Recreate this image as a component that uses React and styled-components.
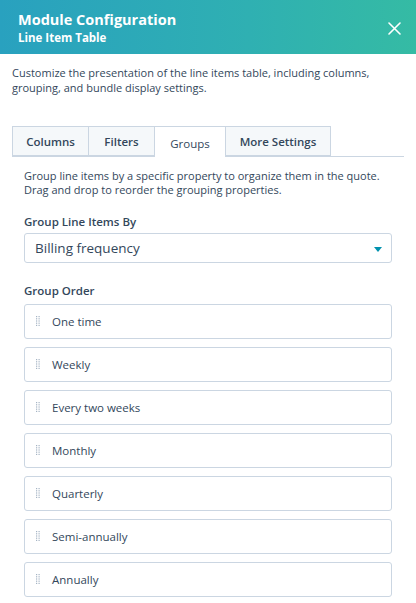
import React from 'react';
import styled, { createGlobalStyle } from 'styled-components';

const GlobalStyle = createGlobalStyle`
  html, body {
    margin: 0;
    padding: 0;
    background: #ffffff;
  }
  body {
    font-family: "Open Sans", "Liberation Sans", sans-serif;
    color: #33475b;
  }
`;

const Panel = styled.div`
  width: 416px;
  height: 603px;
  overflow: hidden;
  background: #ffffff;
`;

const Header = styled.div`
  height: 54px;
  box-sizing: border-box;
  padding: 10px 14px 0 18px;
  display: flex;
  justify-content: space-between;
  align-items: flex-start;
  background: linear-gradient(90deg, #29a1bf 0%, #2fb0b2 60%, #35bba4 100%);
  color: #ffffff;
`;

const Titles = styled.div`
  display: flex;
  flex-direction: column;
`;

const Title = styled.div`
  font-size: 14.5px;
  font-weight: 700;
  line-height: 20px;
`;

const Subtitle = styled.div`
  font-size: 11.5px;
  font-weight: 700;
  line-height: 15px;
`;

const CloseButton = styled.button`
  border: none;
  background: transparent;
  padding: 0;
  margin-top: 10px;
  width: 16px;
  height: 16px;
  display: flex;
  align-items: center;
  justify-content: center;
  cursor: pointer;
`;

const Body = styled.div`
  padding: 12px 12px 0 12px;
`;

const Intro = styled.p`
  margin: 0;
  font-size: 11px;
  line-height: 14.5px;
  color: #33475b;
`;

const Tabs = styled.div`
  display: flex;
  margin-top: 31px;
  border-bottom: 1px solid #cbd6e2;
  height: 30px;
`;

const Tab = styled.div`
  box-sizing: border-box;
  width: ${({ w }) => w}px;
  height: ${({ active }) => (active ? 31 : 30)}px;
  display: flex;
  align-items: center;
  justify-content: center;
  padding-top: ${({ active }) => (active ? 3 : 0)}px;
  font-size: 11.5px;
  font-weight: ${({ active }) => (active ? 500 : 600)};
  color: #33475b;
  background: ${({ active }) => (active ? '#ffffff' : '#f5f8fa')};
  border: 1px solid #cbd6e2;
  border-bottom: ${({ active }) => (active ? 'none' : '1px solid #cbd6e2')};
  margin-left: -1px;
  &:first-child {
    margin-left: 0;
  }
`;

const Content = styled.div`
  padding: 12px 12px 0 12px;
`;

const Help = styled.p`
  margin: 0;
  font-size: 11px;
  line-height: 14px;
  color: #33475b;
`;

const Label = styled.div`
  margin-top: ${({ top }) => top}px;
  font-size: 11.5px;
  font-weight: 600;
  line-height: 15px;
  color: #33475b;
`;

const Select = styled.div`
  margin-top: 4px;
  height: 30px;
  box-sizing: border-box;
  border: 1px solid #cbd6e2;
  border-radius: 3px;
  background: #ffffff;
  display: flex;
  align-items: center;
  justify-content: space-between;
  padding: 0 9px 0 10px;
  font-size: 13.5px;
  color: #33475b;
`;

const Caret = styled.span`
  width: 0;
  height: 0;
  border-left: 4.5px solid transparent;
  border-right: 4.5px solid transparent;
  border-top: 5px solid #0091ae;
  margin-top: 2px;
`;

const OrderList = styled.div`
  margin-top: 6px;
  display: flex;
  flex-direction: column;
  gap: 8px;
`;

const OrderItem = styled.div`
  height: 35px;
  box-sizing: border-box;
  border: 1px solid #cbd6e2;
  border-radius: 3px;
  background: #ffffff;
  display: flex;
  align-items: center;
  padding-left: 11px;
  font-size: 11.5px;
  color: #33475b;
`;

const HandleIcon = styled.svg`
  margin-right: 12px;
  flex: none;
`;

const DragHandle = () => (
  <HandleIcon width="4" height="11" viewBox="0 0 4 11">
    {[0, 1, 2, 3, 4].map(r =>
      [0, 1].map(c => (
        <rect key={`${r}-${c}`} x={c * 2.5} y={r * 2.2} width="1.2" height="1.2" fill="#a5b4c4" />
      ))
    )}
  </HandleIcon>
);

const groups = ['One time', 'Weekly', 'Every two weeks', 'Monthly', 'Quarterly', 'Semi-annually', 'Annually'];

const tabs = [
  { label: 'Columns', w: 77 },
  { label: 'Filters', w: 67 },
  { label: 'Groups', w: 72, active: true },
  { label: 'More Settings', w: 106 }
];

const App = () => (
  <Panel>
    <GlobalStyle />
    <Header>
      <Titles>
        <Title>Module Configuration</Title>
        <Subtitle>Line Item Table</Subtitle>
      </Titles>
      <CloseButton aria-label="Close">
        <svg width="13" height="13" viewBox="0 0 13 13">
          <path d="M1 1 L12 12 M12 1 L1 12" stroke="#ffffff" strokeWidth="1.6" strokeLinecap="round" />
        </svg>
      </CloseButton>
    </Header>
    <Body>
      <Intro>
        Customize the presentation of the line items table, including columns, grouping, and bundle display settings.
      </Intro>
      <Tabs>
        {tabs.map(t => (
          <Tab key={t.label} w={t.w} active={t.active}>
            {t.label}
          </Tab>
        ))}
      </Tabs>
      <Content>
        <Help>
          Group line items by a specific property to organize them in the quote.
          <br />
          Drag and drop to reorder the grouping properties.
        </Help>
        <Label top={17}>Group Line Items By</Label>
        <Select>
          Billing frequency
          <Caret />
        </Select>
        <Label top={20}>Group Order</Label>
        <OrderList>
          {groups.map(g => (
            <OrderItem key={g}>
              <DragHandle />
              {g}
            </OrderItem>
          ))}
        </OrderList>
      </Content>
    </Body>
  </Panel>
);

export default App;
